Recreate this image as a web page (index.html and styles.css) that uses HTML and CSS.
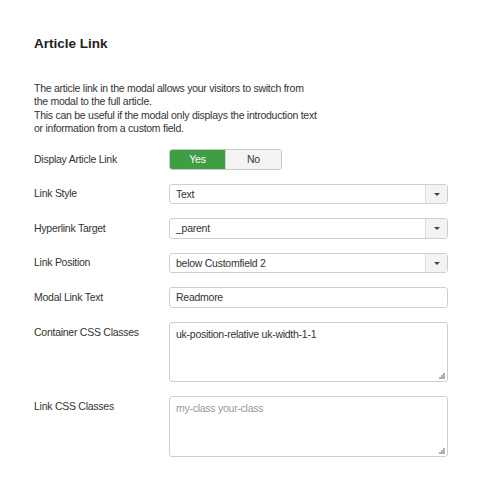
FILE: index.html
```html
<!DOCTYPE html>
<html>
<head>
<meta charset="utf-8">
<link rel="stylesheet" href="styles.css">
</head>
<body>
<div class="page">
  <h2 class="title">Article Link</h2>
  <p class="desc">The article link in the modal allows your visitors to switch from<br>the modal to the full article.<br>This can be useful if the modal only displays the introduction text<br>or information from a custom field.</p>
  <div class="form">
    <div class="row">
      <div class="label">Display Article Link</div>
      <div class="toggle"><span class="opt yes">Yes</span><span class="opt no">No</span></div>
    </div>
    <div class="row">
      <div class="label">Link Style</div>
      <div class="select"><span class="val">Text</span><span class="arrow"></span></div>
    </div>
    <div class="row">
      <div class="label">Hyperlink Target</div>
      <div class="select"><span class="val">_parent</span><span class="arrow"></span></div>
    </div>
    <div class="row">
      <div class="label">Link Position</div>
      <div class="select"><span class="val">below Customfield 2</span><span class="arrow"></span></div>
    </div>
    <div class="row">
      <div class="label">Modal Link Text</div>
      <div class="input">Readmore</div>
    </div>
    <div class="row top">
      <div class="label">Container CSS Classes</div>
      <div class="area"><span class="val">uk-position-relative uk-width-1-1</span><span class="grip"></span></div>
    </div>
    <div class="row top">
      <div class="label">Link CSS Classes</div>
      <div class="area"><span class="val ph">my-class your-class</span><span class="grip"></span></div>
    </div>
  </div>
</div>
</body>
</html>
```
FILE: styles.css
```css
html, body { margin: 0; padding: 0; background: #fff; }
body { font-family: "Liberation Sans", Arial, sans-serif; color: #333; font-size: 10.5px; letter-spacing: -0.26px; }
.page { padding: 36px 0 0 34px; width: 414px; }
.title { margin: 0; font-size: 13.5px; font-weight: bold; line-height: 16px; color: #222; letter-spacing: 0; }
.desc { margin: 30px 0 0; font-size: 10.5px; line-height: 13.3px; }
.form { margin-top: 14px; display: flex; flex-direction: column; gap: 14px; }
.row { display: flex; align-items: center; }
.row.top { align-items: flex-start; }
.row.top .label { padding-top: 4px; }
.label { width: 135px; line-height: 13px; }
.toggle { display: flex; height: 20.5px; width: 113px; border: 1px solid #c8c8c8; border-radius: 3px; box-sizing: border-box; overflow: hidden; }
.opt { flex: 1; display: flex; align-items: center; justify-content: center; }
.yes { background: #3f9e43; color: #fff; }
.no { background: #f3f3f3; color: #333; border-left: 1px solid #d0d0d0; }
.select, .input, .area { width: 279px; box-sizing: border-box; border: 1px solid #cfcfcf; border-radius: 3px; background: #fff; }
.select { height: 20.5px; display: flex; }
.select .val { flex: 1; display: flex; align-items: center; padding-left: 6px; }
.arrow { width: 21px; background: #f3f3f3; border-left: 1px solid #dcdcdc; position: relative; }
.arrow::after { content: ""; position: absolute; left: 8px; top: 8px; border-left: 3px solid transparent; border-right: 3px solid transparent; border-top: 3px solid #444; }
.input { height: 20.5px; display: flex; align-items: center; padding-left: 6px; }
.area { height: 60.5px; position: relative; padding: 5px 6px; }
.area .val { line-height: 13px; }
.ph { color: #999; }
.grip { position: absolute; right: 2px; bottom: 2px; width: 6px; height: 6px;
  background:
    radial-gradient(circle, #aaa 0.7px, transparent 0.8px) 4px 0/2px 2px no-repeat,
    radial-gradient(circle, #aaa 0.7px, transparent 0.8px) 2px 2px/2px 2px no-repeat,
    radial-gradient(circle, #aaa 0.7px, transparent 0.8px) 4px 2px/2px 2px no-repeat,
    radial-gradient(circle, #aaa 0.7px, transparent 0.8px) 0 4px/2px 2px no-repeat,
    radial-gradient(circle, #aaa 0.7px, transparent 0.8px) 2px 4px/2px 2px no-repeat,
    radial-gradient(circle, #aaa 0.7px, transparent 0.8px) 4px 4px/2px 2px no-repeat; }
```
